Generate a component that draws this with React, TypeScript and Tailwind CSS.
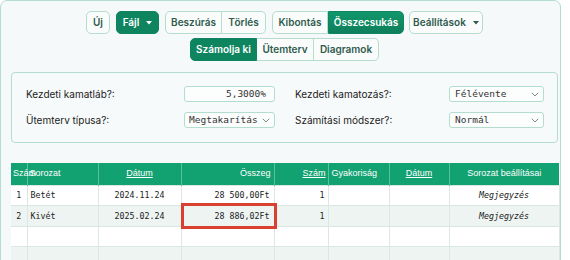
import React from "react";

const sans = { fontFamily: "Inter, 'Noto Sans', sans-serif" };

function Caret({ color }: { color: string }) {
  return (
    <svg width="6" height="4" viewBox="0 0 6 4" className="ml-[7px]">
      <path d="M0 0 L6 0 L3 3.5 Z" fill={color} />
    </svg>
  );
}

function Chevron() {
  return (
    <svg width="8" height="5" viewBox="0 0 8 5" className="shrink-0">
      <path d="M0.8 0.8 L4 4 L7.2 0.8" fill="none" stroke="#6b7f78" strokeWidth="0.9" />
    </svg>
  );
}

const btnBase =
  "h-[23px] flex items-center justify-center text-[10px] font-semibold border";
const normal = "bg-[#fafcfc] border-[#b5dccd] text-[#2f5b4d]";
const active = "bg-[#0f855f] border-[#0f855f] text-white";

export default function App() {
  const rows = [
    { n: "1", s: "Betét", d: "2024.11.24", o: "28 500,00Ft", k: "1", m: "Megjegyzés" },
    { n: "2", s: "Kivét", d: "2025.02.24", o: "28 886,02Ft", k: "1", m: "Megjegyzés", hl: true },
    { n: "", s: "", d: "", o: "", k: "", m: "" },
    { n: "", s: "", d: "", o: "", k: "", m: "" },
    { n: "", s: "", d: "", o: "", k: "", m: "" },
  ];
  const mono = { fontFamily: "'DejaVu Sans Mono', monospace" };
  const head = { fontFamily: "'Liberation Sans', Arial, sans-serif" };
  return (
    <div className="w-[570px] h-[260px] overflow-hidden bg-white" style={sans}>
      <div className="w-[561px] h-[268px] border border-[#b3ddcf] rounded-[7px] bg-[#f6f9f9] pt-[10px] pl-[10px] pr-0">
        <div className="w-[547px]">
          {/* Row 1 */}
          <div className="flex justify-center gap-[6px]">
            <button className={`${btnBase} ${normal} w-[24px] rounded-[5px] font-medium`}>Új</button>
            <button className={`${btnBase} ${active} w-[43px] rounded-[5px]`}>
              Fájl
              <Caret color="#ffffff" />
            </button>
            <div className="flex">
              <button className={`${btnBase} ${normal} w-[57px] rounded-l-[5px]`}>Beszúrás</button>
              <button className={`${btnBase} ${normal} w-[44px] rounded-r-[5px] border-l-0`}>Törlés</button>
            </div>
            <div className="flex">
              <button className={`${btnBase} ${normal} w-[56px] rounded-l-[5px]`}>Kibontás</button>
              <button className={`${btnBase} w-[76px] rounded-r-[5px] border-[#0f855f] text-white bg-gradient-to-b from-[#11976b] to-[#0e7f5b]`}>
                Összecsukás
              </button>
            </div>
            <button className={`${btnBase} ${normal} w-[74px] rounded-[5px] ml-[-1px]`}>
              Beállítások
              <Caret color="#2f5b4d" />
            </button>
          </div>
          {/* Row 2 */}
          <div className="flex justify-center mt-[4px]">
            <button className={`${btnBase} ${active} w-[67px] rounded-l-[5px]`}>Számolja ki</button>
            <button className={`${btnBase} ${normal} w-[57px] border-l-0`}>Ütemterv</button>
            <button className={`${btnBase} ${normal} w-[65px] rounded-r-[5px] border-l-0`}>Diagramok</button>
          </div>

          {/* Form panel */}
          <div className="mt-[11px] h-[71px] border border-[#b3ddcf] rounded-[4px] bg-[#f7fafa] pt-[13px] pl-[14px] pr-[13px]">
            <div className="grid grid-cols-2 gap-x-[20px] gap-y-[10px] text-[10px] text-[#222]">
              <div className="flex items-center justify-between h-[16px]">
                <span>Kezdeti kamatláb?:</span>
                <div className="w-[91px] h-[16px] border border-[#b3ddcf] rounded-[3px] bg-[#fcfdfd] flex items-center justify-end pr-[8px] text-[9.5px] text-[#333]" style={mono}>
                  5,3000%
                </div>
              </div>
              <div className="flex items-center justify-between h-[16px]">
                <span>Kezdeti kamatozás?:</span>
                <div className="w-[95px] h-[16px] border border-[#b3ddcf] rounded-[3px] bg-[#fcfdfd] flex items-center justify-between pl-[5px] pr-[4px] text-[9.5px] text-[#333]" style={mono}>
                  <span>Félévente</span>
                  <Chevron />
                </div>
              </div>
              <div className="flex items-center justify-between h-[16px]">
                <span>Ütemterv típusa?:</span>
                <div className="w-[91px] h-[16px] border border-[#b3ddcf] rounded-[3px] bg-[#fcfdfd] flex items-center justify-between pl-[4px] pr-[4px] text-[9.5px] text-[#333]" style={mono}>
                  <span>Megtakarítás</span>
                  <Chevron />
                </div>
              </div>
              <div className="flex items-center justify-between h-[16px]">
                <span>Számítási módszer?:</span>
                <div className="w-[95px] h-[16px] border border-[#b3ddcf] rounded-[3px] bg-[#fcfdfd] flex items-center justify-between pl-[5px] pr-[4px] text-[9.5px] text-[#333]" style={mono}>
                  <span>Normál</span>
                  <Chevron />
                </div>
              </div>
            </div>
          </div>
        </div>

        {/* Table */}
        <table className="mt-[20px] w-[548px] table-fixed border-collapse">
          <colgroup>
            <col className="w-[16px]" />
            <col className="w-[71px]" />
            <col className="w-[83px]" />
            <col className="w-[93px]" />
            <col className="w-[54px]" />
            <col className="w-[61px]" />
            <col className="w-[60px]" />
            <col className="w-[110px]" />
          </colgroup>
          <thead>
            <tr className="h-[22px] bg-[#12a171] text-white text-[9px]" style={head}>
              <th className="font-normal text-left pl-[2px] border-r border-[#56c39c] whitespace-nowrap overflow-visible">Szám</th>
              <th className="font-normal text-left pl-[2px] border-r border-[#56c39c]">Sorozat</th>
              <th className="font-normal text-center underline border-r border-[#56c39c]">Dátum</th>
              <th className="font-normal text-right pr-[3px] border-r border-[#56c39c]">Összeg</th>
              <th className="font-normal text-right pr-[2px] underline border-r border-[#56c39c]">Szám</th>
              <th className="font-normal text-left pl-[3px] border-r border-[#56c39c]">Gyakoriság</th>
              <th className="font-normal text-center underline border-r border-[#56c39c]">Dátum</th>
              <th className="font-normal text-center">Sorozat beállításai</th>
            </tr>
          </thead>
          <tbody className="text-[8.3px] text-[#222]" style={mono}>
            {rows.map((r, i) => (
              <tr key={i} className={`h-[20.5px] ${i % 2 === 1 ? "bg-[#eef4f2]" : "bg-white"}`}>
                <td className="text-center border border-l-0 border-[#dbe7e3]">{r.n}</td>
                <td className="pl-[3px] border border-[#dbe7e3]">{r.s}</td>
                <td className="text-center border border-[#dbe7e3]">{r.d}</td>
                <td className="relative text-right pr-[4px] border border-[#dbe7e3]">
                  {r.o}
                  {r.hl && (
                    <div className="absolute left-[-1px] right-[-3px] top-[-3px] bottom-[-3px] border-[3px] border-[#d8402f]" />
                  )}
                </td>
                <td className="text-right pr-[3px] border border-[#dbe7e3]">{r.k}</td>
                <td className="border border-[#dbe7e3]"></td>
                <td className="border border-[#dbe7e3]"></td>
                <td className="text-center italic border border-[#dbe7e3]">{r.m}</td>
              </tr>
            ))}
          </tbody>
        </table>
      </div>
    </div>
  );
}
